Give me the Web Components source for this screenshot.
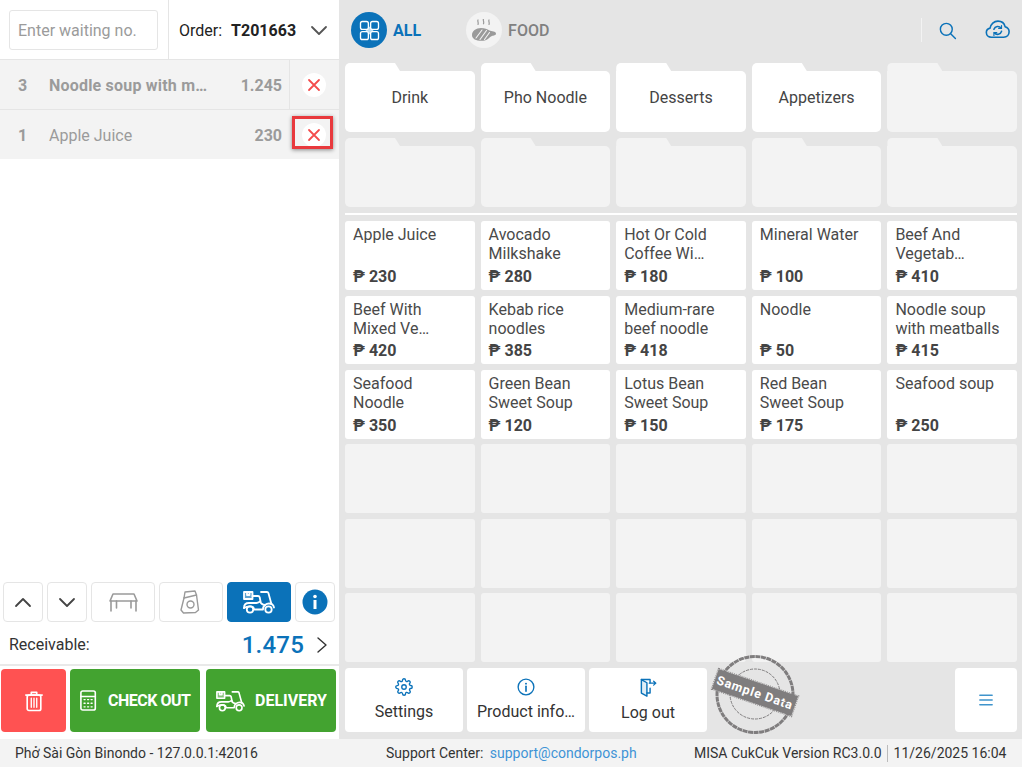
<!DOCTYPE html>
<html lang="en">
<head>
<meta charset="utf-8">
<title>CukCuk POS</title>
<style>
html, body { margin: 0; padding: 0; width: 1022px; height: 767px; overflow: hidden; }
body { font-family: Roboto, "Liberation Sans", sans-serif; color: #333; }
</style>
</head>
<body>
<pos-app></pos-app>
<script>
const BLUE = "#0b72b9";
const SCOOTER = `<path d="M1 2h8.500v7H1z" fill="currentColor" fill-opacity=".35"/><path d="M4 2v3h2.500V2"/><path d="M9.500 6h5.500c1 0 1.500.5 1.700 1.300l.8 4"/><path d="M18 2h6c.8 0 1.200.4 1.400 1l3 11"/><path d="M22 15c1.200-1 2.500-1.500 4-1.500 2.500 0 4.500 1.500 5 4"/><path d="M1 18c0-3 2-5 5-5h7.500c1.500 0 2.500-.8 3.700-1.500"/><path d="M1 18c1.500-1.200 3-1.700 6-1.700 2.500 0 4 1.300 4 3.200h9c0-2 .8-3.500 2-4.500"/><path d="M17.200 11.500c.4 1.800 1.800 3 4.800 3.500"/><circle cx="7" cy="19.500" r="3.200"/><circle cx="25.500" cy="19.500" r="3.200"/>`;
const ICONS = {
    grid: [28, `<g fill="#b9dcf2" stroke="none"><rect x="9" y="9" width="10" height="10"/></g><rect x="2" y="2" width="10.500" height="10.500" rx="2.500" fill="${BLUE}"/><rect x="15.500" y="2" width="10.500" height="10.500" rx="2.500" fill="${BLUE}"/><rect x="2" y="15.500" width="10.500" height="10.500" rx="2.500" fill="${BLUE}"/><rect x="15.500" y="15.500" width="10.500" height="10.500" rx="2.500" fill="${BLUE}"/>`],
    steak: [26, `<path d="M1 16c0-4 4-7 9-7 4 0 6 1 8.500 2.500 2 .8 6.500.6 6.500 3 0 2-2.500 2-4 2.500-1.500.5-2.500 2-4.500 3.300-1.800 1-3.500 1.500-6 1.500C5 21.800 1 20 1 16z" fill="currentColor" stroke="none"/><path d="M5 19l6-8M9 20.500l6.500-9M13.500 20.500l5-7" stroke="#f3f3f3" stroke-width="1.100"/><path d="M7 1c-.8 1.200.8 2.200 0 4.500M12.500 0c-.8 1.200.8 2.500 0 4.800M18 1c-.8 1.200.8 2.200 0 4.500" stroke-width="1.200"/>`],
    search: [24, `<circle cx="10.500" cy="10.500" r="7.500"/><path d="M16 16l6 6"/>`],
    cloud: [28, `<path d="M7 21.500c-3 0-5.500-2.300-5.500-5.200 0-2.500 1.800-4.500 4.200-5C6.500 7 10 3.500 14.500 3.500c4 0 7.200 2.500 8 6.200 2.800.8 4.500 3.200 4.500 5.800 0 3.300-2.500 6-6 6z"/><path d="M10 12.500a4.500 4.500 0 0 1 8-1M18.500 15a4.500 4.500 0 0 1-8 1.500"/><path d="M18.500 8.500v3.200h-3.200M10 19.500v-3.200h3.200" stroke-width="1.300"/>`],
    gear: [24, `<circle cx="12" cy="12" r="3"/><path d="M19.400 15a1.650 1.650 0 0 0 .33 1.820l.06.06a2 2 0 0 1 0 2.830 2 2 0 0 1-2.830 0l-.06-.06a1.650 1.650 0 0 0-1.820-.33 1.650 1.650 0 0 0-1 1.510V21a2 2 0 0 1-2 2 2 2 0 0 1-2-2v-.09A1.650 1.650 0 0 0 9 19.400a1.650 1.650 0 0 0-1.820.33l-.06.06a2 2 0 0 1-2.830 0 2 2 0 0 1 0-2.830l.06-.06a1.650 1.650 0 0 0 .33-1.820 1.650 1.650 0 0 0-1.510-1H3a2 2 0 0 1-2-2 2 2 0 0 1 2-2h.09A1.650 1.650 0 0 0 4.600 9a1.650 1.650 0 0 0-.33-1.820l-.06-.06a2 2 0 0 1 0-2.830 2 2 0 0 1 2.830 0l.06.06a1.650 1.650 0 0 0 1.820.33H9a1.650 1.650 0 0 0 1-1.510V3a2 2 0 0 1 2-2 2 2 0 0 1 2 2v.09a1.650 1.650 0 0 0 1 1.510 1.650 1.650 0 0 0 1.820-.33l.06-.06a2 2 0 0 1 2.830 0 2 2 0 0 1 0 2.830l-.06.06a1.650 1.650 0 0 0-.33 1.820V9a1.650 1.650 0 0 0 1.510 1H21a2 2 0 0 1 2 2 2 2 0 0 1-2 2h-.09a1.650 1.650 0 0 0-1.510 1z"/>`],
    infoline: [24, `<circle cx="12" cy="12" r="10.500"/><path d="M12 11v6.500" stroke-width="2.200"/><circle cx="12" cy="7.500" r="1.300" fill="currentColor" stroke="none"/>`],
    logout: [24, `<path d="M3 2h11v4M14 13v6h-4"/><path d="M3 2v17l7 4V6L3 2z" fill="currentColor" fill-opacity=".12"/><path d="M13 6.500h8M18.500 4l2.800 2.500L18.500 9" stroke-width="1.600"/>`],
    menu: [16, `<path d="M1 2.500h14M1 8h14M1 13.500h14" stroke-width="1.800"/>`],
    up: [18, `<path d="M2 13l7-7 7 7" stroke-width="1.800"/>`],
    down: [18, `<path d="M2 6l7 7 7-7" stroke-width="1.800"/>`],
    right: [18, `<path d="M5 2l8 7-8 7" stroke-width="1.400"/>`],
    table: [30, `<path d="M5 7h21l3 7H2z" stroke-width="1.600"/><path d="M3 14v10M28 14v10M8.500 14v7M23 14v7" stroke-width="1.600"/>`],
    bag: [24, `<path d="M6 2l10-1 1.500 4 2 15-3 2.500-12 .5-2.500-3L5 8z" stroke-width="1.400"/><path d="M5 8l12.500-3" stroke-width="1.400"/><circle cx="11.500" cy="14.500" r="3.500" stroke-width="1.400"/>`],
    scooter: [32, SCOOTER],
    info: [26, `<circle cx="13" cy="13" r="12.500" fill="${BLUE}" stroke="none"/><rect x="11.500" y="11" width="3" height="9" fill="#fff" stroke="none"/><circle cx="13" cy="7.500" r="1.800" fill="#fff" stroke="none"/>`],
    trash: [22, `<path d="M2 5.500h18M8 5.500V2.500h6v3"/><rect x="3.500" y="5.500" width="15" height="17" rx="2"/><path d="M8 9v10M11 9v10M14 9v10" stroke-width="1.500"/>`],
    calc: [20, `<rect x="1" y="1" width="16" height="21" rx="2"/><path d="M1 7h16"/><path d="M4.500 10.500h1.200M8.400 10.500h1.200M12.300 10.500h1.200M4.500 14.500h1.200M8.400 14.500h1.200M12.300 14.500h1.200M4.500 18.500h1.200M8.400 18.500h1.200M12.300 18.500h1.200" stroke-width="1.500"/>`],
    close: [14, `<path d="M2 2l10 10M12 2L2 12" stroke-width="1.800"/>`]
};

// base class, every element gets its markup from a static html string
class PosElement extends HTMLElement {
    constructor() {
        super();
        this.attachShadow({ mode: "open" });
        this.shadowRoot.innerHTML = this.constructor.html;
    }
    byId(id) {
        return this.shadowRoot.getElementById(id);
    }
}

class PosIcon extends PosElement {
    static html = `<style>:host { display: inline-flex; } svg { display: block; fill: none; stroke: currentColor; stroke-width: 1.800; stroke-linecap: round; stroke-linejoin: round; }</style><span id="box"></span>`;
    connectedCallback() {
        const name = this.getAttribute("name");
        const [box, body] = ICONS[name];
        const w = this.getAttribute("w") || box;
        const h = this.getAttribute("h") || w;
        const vh = name === "scooter" ? 24 : (name === "calc" ? 23 : (name === "trash" ? 24 : (name === "steak" ? 23 : box)));
        this.byId("box").innerHTML = `<svg width="${w}" height="${h}" viewBox="0 0 ${box} ${vh}">${body}</svg>`;
    }
}

class OrderRow extends PosElement {
    static html = `<style>
:host { display: flex; align-items: center; background: #f3f3f3; color: #9b9b9b; font-size: 16px; position: relative; height: 49px; }
:host([bold]) { border-bottom: 1px solid #e5e5e5; }
:host([bold]) .name, .qty, .amt { font-weight: 700; }
:host([bold]) .name { letter-spacing: .2px; }
.qty { width: 49px; padding: 1px 0 0 18px; box-sizing: border-box; }
.name { flex: 1; white-space: nowrap; padding-top: 1px; }
.amt { padding: 1px 7px 0 0; }
.del { width: 50px; height: 100%; display: flex; align-items: center; justify-content: center; border-left: 1px solid transparent; padding-right: 1px; box-sizing: border-box; }
:host([bold]) .del { border-left-color: #e5e5e5; }
.circle { width: 24px; height: 24px; border-radius: 50%; background: #fff; color: #f44c4c; display: flex; align-items: center; justify-content: center; }
.mark { position: absolute; left: 292px; top: 6px; width: 35px; height: 27px; border: 3px solid #e8393d; box-shadow: 0 1px 4px rgba(0,0,0,.45); display: none; }
:host([marked]) .mark { display: block; }
</style>
<span class="qty" id="qty"></span><span class="name"><slot></slot></span><span class="amt" id="amt"></span>
<span class="del"><span class="circle"><pos-icon name="close"></pos-icon></span></span><span class="mark"></span>`;
    connectedCallback() {
        this.byId("qty").textContent = this.getAttribute("qty");
        this.byId("amt").textContent = this.getAttribute("amt");
    }
}

class SquareButton extends PosElement {
    static html = `<style>
:host { display: flex; align-items: center; justify-content: center; height: 40px; box-sizing: border-box; border: 1px solid #e5e5e5; border-radius: 4px; background: #fff; color: #444; }
:host([wide]) { width: 64px; color: #9a9a9a; }
:host([narrow]) { width: 40px; }
:host([active]) { background: ${BLUE}; border-color: ${BLUE}; color: #fff; }
</style><slot></slot>`;
}

class ActionButton extends PosElement {
    static html = `<style>
:host { display: flex; align-items: center; height: 63px; border-radius: 4px; background: #43a330; color: #fff; font-weight: 700; font-size: 16px; overflow: hidden; white-space: nowrap; box-sizing: border-box; }
:host([red]) { background: #ff5252; justify-content: center; }
</style><slot></slot>`;
}

class OrderPanel extends PosElement {
    static html = `<style>
:host { display: flex; flex-direction: column; background: #fff; height: 739px; width: 339px; }
.head { display: flex; height: 59px; border-bottom: 1px solid #e5e5e5; flex: none; }
.wait { border-right: 1px solid #e5e5e5; padding: 10px 0 0 9px; box-sizing: border-box; width: 169px; }
.input { width: 149px; height: 40px; box-sizing: border-box; border: 1px solid #e5e5e5; border-radius: 3px; font-size: 16px; color: #9b9b9b; padding-left: 8px; display: flex; align-items: center; }
.order { flex: 1; display: flex; align-items: center; font-size: 16px; padding: 1px 11px 0 10px; color: #222; }
.order b { margin-left: 9px; flex: 1; }
.order pos-icon { color: #555; }
.rows { flex: 1; }
.tools { display: flex; gap: 4px; padding-left: 3px; flex: none; }
.due { display: flex; align-items: center; height: 39px; padding: 3px 8px 0 9px; border-bottom: 2px solid #e9e9e9; flex: none; font-size: 16px; color: #333; }
.due span { flex: 1; }
.due b { color: ${BLUE}; font-size: 24px; font-weight: 500; letter-spacing: .2px; margin-right: 9px; }
.acts { display: flex; padding: 3px 0 7px 1px; flex: none; }
.trash { width: 65px; margin-right: 4px; }
.check { width: 130px; margin-right: 6px; padding-left: 10px; letter-spacing: -.5px; }
.check pos-icon { margin-right: 10px; }
.deliv { width: 130px; padding-left: 10px; }
.deliv pos-icon { margin-right: 10px; }
.deliv span { width: 72px; overflow: hidden; }
</style>
<div class="head">
  <div class="wait"><div class="input">Enter waiting no.</div></div>
  <div class="order">Order:<b>T201663</b><pos-icon name="down" w="18"></pos-icon></div>
</div>
<div class="rows">
  <order-row bold qty="3" amt="1.245">Noodle soup with m…</order-row>
  <order-row marked qty="1" amt="230">Apple Juice</order-row>
</div>
<div class="tools">
  <square-button narrow><pos-icon name="up" w="18"></pos-icon></square-button>
  <square-button narrow><pos-icon name="down" w="18"></pos-icon></square-button>
  <square-button wide><pos-icon name="table" w="30" h="30"></pos-icon></square-button>
  <square-button wide><pos-icon name="bag" w="24"></pos-icon></square-button>
  <square-button wide active><pos-icon name="scooter" w="32" h="24"></pos-icon></square-button>
  <square-button narrow><pos-icon name="info" w="26"></pos-icon></square-button>
</div>
<div class="due"><span>Receivable:</span><b>1.475</b><pos-icon name="right" w="18" h="18"></pos-icon></div>
<div class="acts">
  <action-button red class="trash"><pos-icon name="trash" w="20" h="22"></pos-icon></action-button>
  <action-button class="check"><pos-icon name="calc" w="18" h="23"></pos-icon>CHECK OUT</action-button>
  <action-button class="deliv"><pos-icon name="scooter" w="29" h="22"></pos-icon><span>DELIVERY</span></action-button>
</div>`;
}

class TabItem extends PosElement {
    static html = `<style>
:host { display: flex; align-items: center; gap: 6px; font-size: 16px; color: #808080; font-weight: 500; }
.disc { width: 36px; height: 36px; border-radius: 50%; background: #f3f3f3; color: #9a9a9a; display: flex; align-items: center; justify-content: center; }
:host([active]) { color: ${BLUE}; font-weight: 700; }
:host([active]) .disc { background: ${BLUE}; color: #fff; }
</style><span class="disc"><slot name="icon"></slot></span><slot></slot>`;
}

class FolderTile extends PosElement {
    static html = `<style>
:host { display: flex; flex-direction: column; color: #444; font-size: 16px; --tile: #f3f3f3; }
:host([filled]) { --tile: #fff; }
.tab { height: 8px; width: 55px; background: var(--tile); clip-path: polygon(0 0, 50px 0, 55px 8px, 0 8px); border-radius: 5px 0 0 0; flex: none; }
.body { flex: 1; background: var(--tile); border-radius: 0 5px 5px 5px; display: flex; align-items: center; justify-content: center; padding-bottom: 8px; box-sizing: border-box; }
</style><div class="tab"></div><div class="body"><slot></slot></div>`;
}

class ItemTile extends PosElement {
    static html = `<style>
:host { display: flex; flex-direction: column; background: #f3f3f3; border-radius: 3px; padding: 4px 8px 4px; box-sizing: border-box; color: #4a4a4a; font-size: 16px; line-height: 19px; min-height: 0; }
:host([filled]) { background: #fff; }
.name { flex: 1; }
.price { font-weight: 700; line-height: 19px; font-size: 16px; color: #444; }
</style><div class="name"><slot></slot></div><div class="price" id="price"></div>`;
    connectedCallback() {
        const p = this.getAttribute("price");
        if (p) this.byId("price").textContent = "₱ " + p;
    }
}

class ToolButton extends PosElement {
    static html = `<style>
:host { display: flex; flex-direction: column; align-items: center; justify-content: center; width: 118px; height: 64px; background: #fff; border-radius: 4px; font-size: 16px; color: #333; gap: 6px; white-space: nowrap; }
:host([small]) { width: 62px; color: #3f94cc; }
::slotted([slot=icon]) { color: ${BLUE}; }
:host([small]) ::slotted([slot=icon]) { color: #3f94cc; }
</style><slot name="icon"></slot><slot></slot>`;
}

class SampleStamp extends PosElement {
    static html = `<style>
:host { position: absolute; left: 710px; top: 652px; width: 90px; height: 84px; pointer-events: none; }
svg { position: absolute; left: 0; top: 0; }
.band { position: absolute; left: 3px; top: 30px; width: 84px; height: 21px; background: #7f7d7e; transform: rotate(19deg); color: #fff; font: 700 12.500px Roboto, "Liberation Sans", sans-serif; letter-spacing: .8px; display: flex; align-items: center; justify-content: center; white-space: nowrap; outline: 1px dotted #8d8b8c; }
</style>
<svg width="90" height="84" viewBox="0 0 90 84" fill="none" stroke="#7f7d7e"><circle cx="45" cy="42.500" r="38" stroke-width="3" stroke-dasharray="5 .6"/><circle cx="45" cy="42" r="25" stroke-width="1" stroke-dasharray="3 1"/></svg>
<div class="band">Sample Data</div>`;
}

class MenuPanel extends PosElement {
    static html = `<style>
:host { display: flex; flex-direction: column; flex: 1; background: #e5e5e5; height: 739px; padding: 0 5px 0 6px; box-sizing: border-box; position: relative; }
.tabs { height: 63px; flex: none; display: flex; align-items: center; padding: 0 0 3px 6px; box-sizing: border-box; }
.tabs tab-item + tab-item { margin-left: 45px; }
.tabs .side { margin-left: auto; display: flex; align-items: center; height: 24px; border-left: 1px solid #f3f3f3; padding: 0 7px 0 16px; gap: 28px; color: ${BLUE}; }
.grid { display: grid; grid-template-columns: repeat(5, 1fr); column-gap: 6px; }
.folders { grid-template-rows: 69px 69px; row-gap: 6px; flex: none; }
.rule { height: 2px; background: #fff; margin: 6px 0 6.100px; flex: none; }
.items { grid-template-rows: repeat(6, 1fr); row-gap: 5.600px; height: 441px; flex: none; }
.bar { display: flex; gap: 4px; margin-top: 5.900px; flex: none; }
.bar .end { margin-left: auto; }
</style>
<div class="tabs">
  <tab-item active><pos-icon slot="icon" name="grid" w="21"></pos-icon>ALL</tab-item>
  <tab-item><pos-icon slot="icon" name="steak" w="26" h="23"></pos-icon>FOOD</tab-item>
  <div class="side"><pos-icon name="search" w="19"></pos-icon><pos-icon name="cloud" w="25"></pos-icon></div>
</div>
<div class="grid folders">
  <folder-tile filled>Drink</folder-tile><folder-tile filled>Pho Noodle</folder-tile><folder-tile filled>Desserts</folder-tile><folder-tile filled>Appetizers</folder-tile><folder-tile></folder-tile>
  <folder-tile></folder-tile><folder-tile></folder-tile><folder-tile></folder-tile><folder-tile></folder-tile><folder-tile></folder-tile>
</div>
<div class="rule"></div>
<div class="grid items">
  <item-tile filled price="230">Apple Juice</item-tile>
  <item-tile filled price="280">Avocado Milkshake</item-tile>
  <item-tile filled price="180">Hot Or Cold Coffee Wi…</item-tile>
  <item-tile filled price="100">Mineral Water</item-tile>
  <item-tile filled price="410">Beef And Vegetab…</item-tile>
  <item-tile filled price="420">Beef With Mixed Ve…</item-tile>
  <item-tile filled price="385">Kebab rice noodles</item-tile>
  <item-tile filled price="418">Medium-rare beef noodle</item-tile>
  <item-tile filled price="50">Noodle</item-tile>
  <item-tile filled price="415">Noodle soup with meatballs</item-tile>
  <item-tile filled price="350">Seafood Noodle</item-tile>
  <item-tile filled price="120">Green Bean Sweet Soup</item-tile>
  <item-tile filled price="150">Lotus Bean Sweet Soup</item-tile>
  <item-tile filled price="175">Red Bean Sweet Soup</item-tile>
  <item-tile filled price="250">Seafood soup</item-tile>
  <item-tile></item-tile><item-tile></item-tile><item-tile></item-tile><item-tile></item-tile><item-tile></item-tile>
  <item-tile></item-tile><item-tile></item-tile><item-tile></item-tile><item-tile></item-tile><item-tile></item-tile>
  <item-tile></item-tile><item-tile></item-tile><item-tile></item-tile><item-tile></item-tile><item-tile></item-tile>
</div>
<div class="bar">
  <tool-button><pos-icon slot="icon" name="gear" w="18"></pos-icon>Settings</tool-button>
  <tool-button><pos-icon slot="icon" name="infoline" w="18"></pos-icon>Product info…</tool-button>
  <tool-button><pos-icon slot="icon" name="logout" w="19"></pos-icon>Log out</tool-button>
  <tool-button small class="end"><pos-icon slot="icon" name="menu" w="14"></pos-icon></tool-button>
</div>`;
}

class StatusBar extends PosElement {
    static html = `<style>
:host { display: flex; align-items: center; height: 28px; background: #f3f3f3; font-size: 14px; color: #333; padding-left: 15px; box-sizing: border-box; white-space: nowrap; }
.shop { width: 371px; }
.help { width: 308px; }
a { color: #3f94d6; margin-left: 3px; }
.sep { border-left: 1px solid #bbb; height: 17px; margin: 0 6px 0 5px; }
</style>
<span class="shop">Phở Sài Gòn Binondo - 127.0.0.1:42016</span>
<span class="help">Support Center: <a>support@condorpos.ph</a></span>
<span>MISA CukCuk Version RC3.0.0</span><span class="sep"></span><span>11/26/2025 16:04</span>`;
}

class PosApp extends PosElement {
    static html = `<style>
:host { display: block; width: 1022px; height: 767px; position: relative; }
.main { display: flex; }
</style>
<div class="main"><order-panel></order-panel><menu-panel></menu-panel></div>
<status-bar></status-bar>
<sample-stamp></sample-stamp>`;
}

customElements.define("pos-icon", PosIcon);
customElements.define("order-row", OrderRow);
customElements.define("square-button", SquareButton);
customElements.define("action-button", ActionButton);
customElements.define("order-panel", OrderPanel);
customElements.define("tab-item", TabItem);
customElements.define("folder-tile", FolderTile);
customElements.define("item-tile", ItemTile);
customElements.define("tool-button", ToolButton);
customElements.define("sample-stamp", SampleStamp);
customElements.define("menu-panel", MenuPanel);
customElements.define("status-bar", StatusBar);
customElements.define("pos-app", PosApp);
</script>
</body>
</html>
